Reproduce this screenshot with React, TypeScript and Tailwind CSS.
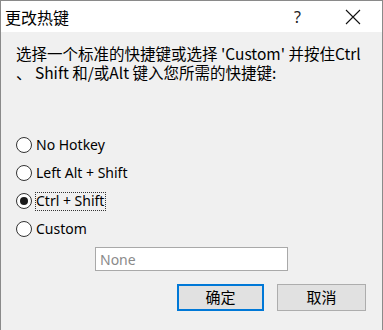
import React from "react";

const cjk = { fontFamily: '"Noto Sans CJK SC", "Noto Sans", sans-serif' };
const latin = { fontFamily: '"Noto Sans", "Noto Sans CJK SC", sans-serif' };

function Radio({ label, checked, focused }: { label: string; checked?: boolean; focused?: boolean }) {
  return (
    <div className="flex h-[28px] items-center pl-[15px]">
      <div className="flex h-[16px] w-[16px] items-center justify-center rounded-full border border-[#333333] bg-white">
        {checked && <div className="h-[8px] w-[8px] rounded-full bg-[#1a1a1a]" />}
      </div>
      <div
        className={
          "ml-[3px] flex h-[19px] items-center border pr-[1px] text-[14px] leading-none text-[#000] " +
          (focused ? "border-dotted border-[#333333]" : "border-transparent")
        }
        style={latin}
      >
        {label}
      </div>
    </div>
  );
}

export default function App() {
  return (
    <div className="flex h-[330px] w-[383px] flex-col overflow-hidden border-x border-t border-[#8a8a8a] bg-[#f0f0f0]">
      <div className="flex h-[31px] shrink-0 items-center bg-white pl-[4px]">
        <div className="text-[16px] leading-none text-black" style={cjk}>
          更改热键
        </div>
        <div className="ml-auto mr-[44px] text-[16px] leading-none text-[#222]" style={latin}>
          ?
        </div>
        <svg width="16" height="16" viewBox="0 0 16 16" className="mr-[21px]">
          <path d="M1 1 L15 15 M15 1 L1 15" stroke="#111" strokeWidth="1.1" fill="none" />
        </svg>
      </div>
      <div className="flex flex-1 flex-col">
        <div className="flex flex-col gap-[2px] pl-[15px] pt-[13px] text-[15.5px] leading-[17px] text-black" style={cjk}>
          <div className="whitespace-nowrap">选择一个标准的快捷键或选择 'Custom' 并按住Ctrl</div>
          <div className="whitespace-nowrap">、 Shift 和/或Alt 键入您所需的快捷键:</div>
        </div>
        <div className="mt-[50px] flex flex-col">
          <Radio label="No Hotkey" />
          <Radio label="Left Alt + Shift" />
          <Radio label="Ctrl + Shift" checked focused />
          <Radio label="Custom" />
        </div>
        <div className="ml-[94px] mt-[4px] flex h-[24px] w-[193px] items-center border border-[#a9a9a9] bg-white pl-[4px] text-[14px] text-[#8a8a8a]" style={latin}>
          None
        </div>
        <div className="mr-[16px] mt-[13px] flex justify-end gap-[13px]">
          <div className="flex h-[27px] w-[87px] items-center justify-center border-2 border-[#0078d7] bg-[#e1e1e1] text-[15px] text-black" style={cjk}>
            确定
          </div>
          <div className="flex h-[27px] w-[89px] items-center justify-center border border-[#adadad] bg-[#e1e1e1] text-[15px] text-black" style={cjk}>
            取消
          </div>
        </div>
      </div>
    </div>
  );
}
